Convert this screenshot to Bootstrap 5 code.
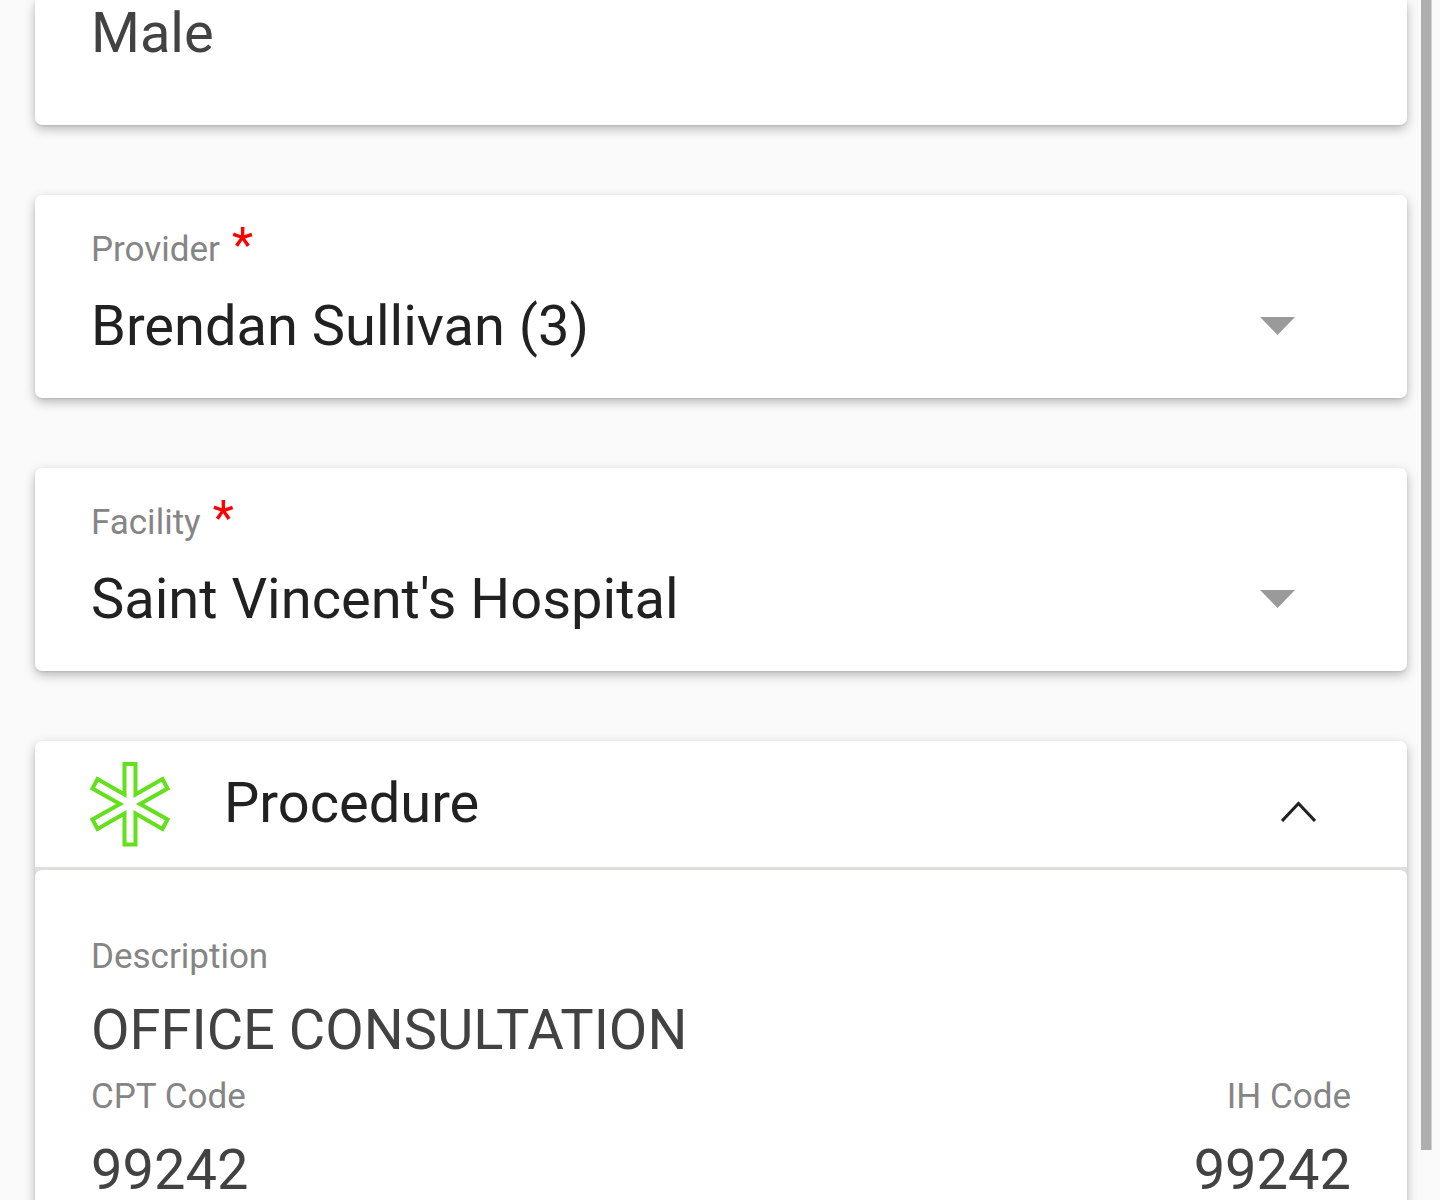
<!DOCTYPE html>
<html lang="en">
<head>
<meta charset="utf-8">
<meta name="viewport" content="width=device-width, initial-scale=1">
<title>Patient charge</title>
<link href="https://cdn.jsdelivr.net/npm/bootstrap@5.3.0/dist/css/bootstrap.min.css" rel="stylesheet">
<style>
  body { background: #fafafa; font-family: Roboto, "Noto Sans", sans-serif; color: #212121; }
  .screen { padding: 0 33px 0 35px; gap: 70px; }
  .panel { background: #fff; border-radius: 7px; box-shadow: 0 4px 11px rgba(0, 0, 0, .27), 0 1px 2px rgba(0, 0, 0, .09); }
  .panel-first { border-top-left-radius: 0; border-top-right-radius: 0; padding: 3px 56px 62px; }
  .panel-field { padding: 34px 56px 39px; }
  .field-label { font-size: 35px; line-height: 42px; font-weight: 400; color: #858585; }
  .field-value { font-size: 56px; line-height: 60px; color: #424242; }
  .required-mark { font-size: 49px; line-height: 32px; color: #f00; margin-left: 12px; }
  .picker { margin-top: 22px; }
  .picker .form-select { height: 66px; padding: 0 100px 0 0; border: 0; border-radius: 0; background: none; font-size: 56px; line-height: 66px; color: #212121; }
  .picker-arrow { right: 56px; width: 35px; height: 18px; pointer-events: none; top: 24px; }
  .section-toggle { height: 126px; padding: 0 91px 0 55px; border: 0; background: none; color: inherit; font-size: 56px; line-height: 66px; text-align: left; }
  .section-title { margin-left: 54px; padding-bottom: 3px; }
  .section-chevron { margin-top: 15px; }
  .section-frame { background: #dededc; padding-top: 3px; }
  .section-body { background: #fff; border-radius: 7px; padding: 66px 56px 56px; }
  .detail .field-value { margin-top: 22px; }
  .detail-row { margin-top: 16px; }
  .scroll-thumb { top: 0; right: 8px; width: 11px; height: 1150px; background: #aeaeae; border-right: 1px solid #d0d0d0; }
</style>
<script src="https://cdn.jsdelivr.net/npm/bootstrap@5.3.0/dist/js/bootstrap.bundle.min.js"></script>
</head>
<body class="vh-100 overflow-hidden">
<main class="screen d-flex flex-column">
  <section class="panel panel-first">
    <div class="field-value">Male</div>
  </section>

  <section class="panel panel-field">
    <label class="field-label d-flex align-items-start" for="provider">Provider<span class="required-mark">*</span></label>
    <div class="picker position-relative">
      <select class="form-select" id="provider" required>
        <option selected>Brendan Sullivan (3)</option>
      </select>
      <svg class="picker-arrow position-absolute" viewBox="0 0 35 18" aria-hidden="true"><path d="M0 0h35L17.500 18z" fill="#9a9a9a"/></svg>
    </div>
  </section>

  <section class="panel panel-field">
    <label class="field-label d-flex align-items-start" for="facility">Facility<span class="required-mark">*</span></label>
    <div class="picker position-relative">
      <select class="form-select" id="facility" required>
        <option selected>Saint Vincent's Hospital</option>
      </select>
      <svg class="picker-arrow position-absolute" viewBox="0 0 35 18" aria-hidden="true"><path d="M0 0h35L17.500 18z" fill="#9a9a9a"/></svg>
    </div>
  </section>

  <section class="panel">
    <button class="section-toggle w-100 d-flex align-items-center" type="button" data-bs-toggle="collapse" data-bs-target="#procedure" aria-expanded="true" aria-controls="procedure">
      <svg width="80" height="86" viewBox="0 0 80 86" fill="none" stroke="#64e01c" stroke-width="4" aria-hidden="true">
        <path d="M34.500 3h11v30.500L72.500 18l5 9.500L50 43l27.500 15.500-5 9.500L45.500 52.500V83.500h-11V52.500L7.500 68l-5-9.500L30 43 2.500 27.500l5-9.500 27 15.500z"/>
      </svg>
      <span class="section-title me-auto">Procedure</span>
      <svg class="section-chevron" width="35" height="21" viewBox="0 0 35 21" fill="none" stroke="#212121" stroke-width="3" aria-hidden="true"><path d="M1 20 17.500 2.500 34 20"/></svg>
    </button>
    <div class="section-frame collapse show" id="procedure">
      <div class="section-body">
        <div class="detail">
          <div class="field-label">Description</div>
          <div class="field-value">OFFICE CONSULTATION</div>
        </div>
        <div class="detail-row d-flex justify-content-between">
          <div class="detail">
            <div class="field-label">CPT Code</div>
            <div class="field-value">99242</div>
          </div>
          <div class="detail text-end">
            <div class="field-label">IH Code</div>
            <div class="field-value">99242</div>
          </div>
        </div>
      </div>
    </div>
  </section>
</main>
<div class="scroll-thumb position-fixed" aria-hidden="true"></div>
</body>
</html>
